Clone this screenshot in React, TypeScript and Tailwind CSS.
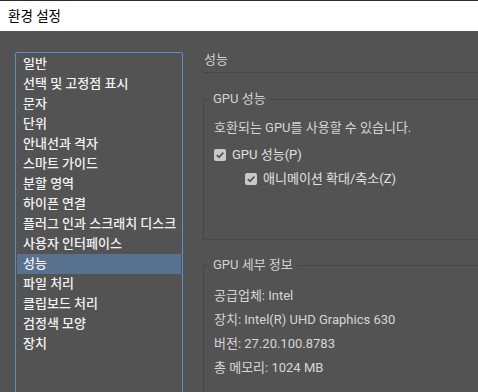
const menuItems = [
  "일반",
  "선택 및 고정점 표시",
  "문자",
  "단위",
  "안내선과 격자",
  "스마트 가이드",
  "분할 영역",
  "하이픈 연결",
  "플러그 인과 스크래치 디스크",
  "사용자 인터페이스",
  "성능",
  "파일 처리",
  "클립보드 처리",
  "검정색 모양",
  "장치",
];

const gpuDetails = [
  "공급업체: Intel",
  "장치: Intel(R) UHD Graphics 630",
  "버전: 27.20.100.8783",
  "총 메모리: 1024 MB",
];

function CheckBox() {
  return (
    <span className="flex h-[12px] w-[12px] items-center justify-center rounded-[2px] bg-[#c9c9c9]">
      <svg width="10" height="10" viewBox="0 0 10 10">
        <path
          d="M1.8 5.2 L4 7.3 L8.3 2.6"
          fill="none"
          stroke="#505050"
          strokeWidth="1.6"
        />
      </svg>
    </span>
  );
}

export default function App() {
  return (
    <div
      className="h-[392px] w-[478px] overflow-hidden bg-[#535353] text-[13px]"
      style={{ fontFamily: 'Roboto, "Noto Sans CJK KR", sans-serif' }}
    >
      <div className="h-[31px] border-t border-[#2b2b2b] bg-white pl-[8px] text-[13.5px] leading-[30px] text-black">
        환경 설정
      </div>

      <div className="flex pl-[15px] pt-[21px]">
        <div className="h-[360px] w-[168px] shrink-0 rounded-[2px] border border-[#5d8fcb] p-[1px]">
          {menuItems.map((item) => (
            <div
              key={item}
              className={
                "h-[20px] pl-[6px] leading-[20px] font-medium text-[#f2f2f2] " +
                (item === "성능" ? "bg-[#57718f]" : "")
              }
            >
              {item}
            </div>
          ))}
        </div>

        <div className="ml-[20px] w-[300px] shrink-0">
          <div className="border-b border-[#474747] pb-[4px] pl-[1px] leading-[16px] text-[#d2d2d2]">
            성능
          </div>

          <fieldset className="mt-[18px] border border-[#474747] pb-[52px] pl-[10px]">
            <legend className="ml-[-5px] px-[4px] leading-[16px] text-[#d2d2d2]">
              GPU 성능
            </legend>
            <div className="mt-[13px] leading-[16px] text-[#d6d6d6]">
              호환되는 GPU를 사용할 수 있습니다.
            </div>
            <div className="mt-[11px] flex items-center gap-[6px] leading-[16px] text-[#e0e0e0]">
              <CheckBox />
              <span>GPU 성능(P)</span>
            </div>
            <div className="mt-[8px] flex items-center gap-[6px] pl-[31px] leading-[16px] text-[#e0e0e0]">
              <CheckBox />
              <span>애니메이션 확대/축소(Z)</span>
            </div>
          </fieldset>

          <fieldset className="mt-[17px] border border-[#474747] pb-[30px] pl-[10px]">
            <legend className="ml-[-5px] px-[4px] leading-[16px] text-[#d2d2d2]">
              GPU 세부 정보
            </legend>
            <div className="mt-[11px] text-[#d6d6d6]">
              {gpuDetails.map((line) => (
                <div key={line} className="leading-[24px]">
                  {line}
                </div>
              ))}
            </div>
          </fieldset>
        </div>
      </div>
    </div>
  );
}
